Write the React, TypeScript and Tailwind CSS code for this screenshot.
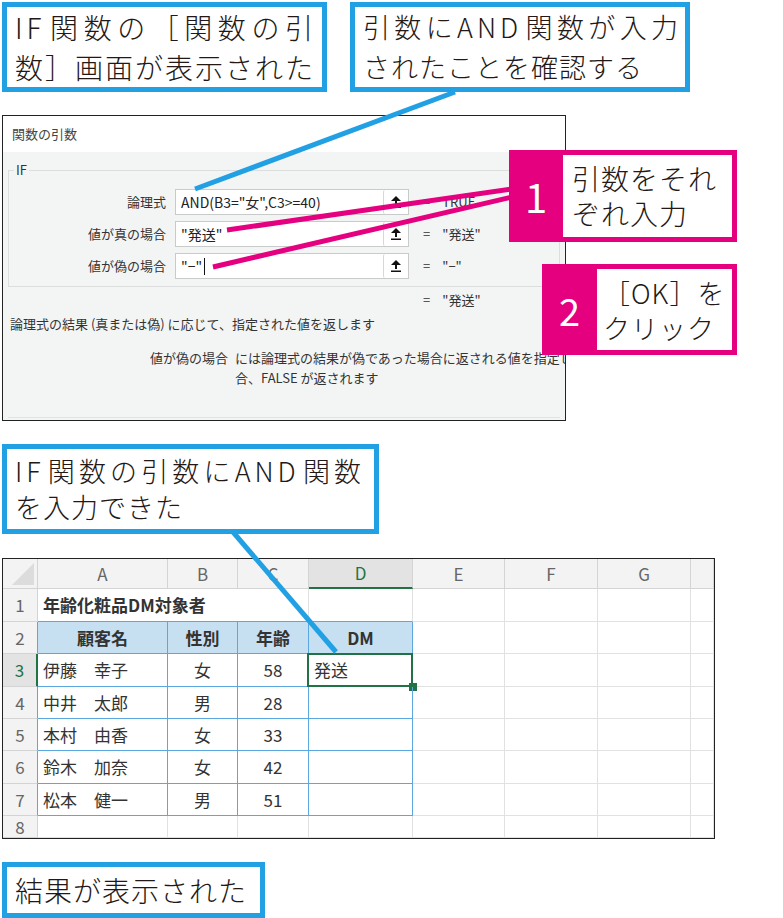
import clsx from 'clsx'
import type { ReactNode } from 'react'

const BLUE = 'border-[#22a0e4]'

function Callout({ className, children }: { className?: string; children: ReactNode }) {
  return (
    <div
      className={clsx(
        'border-[5px] bg-white pl-[8px] flex flex-col justify-center whitespace-nowrap font-light tracking-[1px] text-[#231815]',
        BLUE,
        className
      )}
    >
      {children}
    </div>
  )
}

function StepCallout({ num, className, boxClass, numClass, children }: {
  num: string
  className?: string
  boxClass?: string
  numClass?: string
  children: ReactNode
}) {
  return (
    <div className={clsx('absolute flex bg-[#e4007f] py-[5px] pr-[5px]', className)}>
      <div className={clsx('flex items-center justify-center text-white font-[\'Noto_Sans\',sans-serif]', numClass)}>
        {num}
      </div>
      <div
        className={clsx(
          'flex-1 bg-white flex flex-col justify-center whitespace-nowrap font-light leading-[35px] tracking-[1px] text-[#231815]',
          boxClass
        )}
      >
        {children}
      </div>
    </div>
  )
}

function UpIcon() {
  return (
    <svg width="12" height="14" viewBox="0 0 12 14">
      <polygon points="6,1 11,6 1,6" fill="#111" />
      <rect x="5" y="5" width="2" height="5" fill="#111" />
      <rect x="1" y="11.5" width="10" height="1.5" fill="#111" />
    </svg>
  )
}

function ArgRow({ label, value, result, cursor }: { label: string; value: string; result: string; cursor?: boolean }) {
  return (
    <div className="flex items-center h-[26px]">
      <div className="w-[157px] text-right text-[13px] text-[#333]">{label}</div>
      <div className="ml-[9px] w-[234px] h-[26px] flex items-center bg-white border border-[#c9cbcb]">
        <div className="flex-1 pl-[5px] text-[14px] text-[#222] flex items-center whitespace-nowrap">
          {value}
          {cursor && <span className="ml-[2px] inline-block w-[1px] h-[17px] bg-[#111]" />}
        </div>
        <div className="w-[25px] h-[24px] flex items-center justify-center border-l border-[#d6d8d8] rounded-[2px]">
          <UpIcon />
        </div>
      </div>
      <div className="ml-[14px] flex gap-[12px] text-[13px] text-[#333] whitespace-nowrap">
        <span>=</span>
        <span>{result}</span>
      </div>
    </div>
  )
}

function Dialog() {
  return (
    <div className="ml-[2px] mt-[23px] w-[564px] h-[306px] border border-[#222] flex flex-col overflow-hidden">
      <div className="h-[36px] bg-white flex items-center pl-[9px] text-[13px] text-[#444]">関数の引数</div>
      <div className="flex-1 bg-[#f3f5f5] flex flex-col">
        <div className="relative mt-[18px] ml-[5px] mr-[5px] h-[117px] border border-[#dcdede] pt-[18px] flex flex-col gap-[6px]">
          <span className="absolute -top-[10px] left-[5px] px-[2px] bg-[#f3f5f5] text-[13px] text-[#333] leading-[18px]">IF</span>
          <ArgRow label="論理式" value={'AND(B3="女",C3>=40)'} result="TRUE" />
          <ArgRow label="値が真の場合" value={'"発送"'} result={'"発送"'} />
          <ArgRow label="値が偽の場合" value={'"−"'} result={'"−"'} cursor />
        </div>
        <div className="mt-[4px] pl-[420px] flex gap-[12px] text-[13px] leading-[18px] text-[#333]">
          <span>=</span>
          <span>"発送"</span>
        </div>
        <div className="mt-[6px] pl-[7px] text-[13px] leading-[18px] text-[#333] whitespace-nowrap">
          論理式の結果 (真または偽) に応じて、指定された値を返します
        </div>
        <div className="mt-[15px] flex text-[13px] leading-[20px] text-[#333] whitespace-nowrap">
          <div className="pl-[147px] w-[232px] shrink-0">値が偽の場合</div>
          <div className="flex flex-col overflow-hidden">
            <span>には論理式の結果が偽であった場合に返される値を指定します。省略された場</span>
            <span>合、FALSE が返されます</span>
          </div>
        </div>
        <div className="mt-auto mb-[2px] mx-[5px] border-b border-[#e1e3e3]" />
      </div>
    </div>
  )
}

const gridLine = 'border-r border-b border-[#e1e1e1]'
const tableLine = 'border-r border-b border-[#5ba8e0]'
const headLine = 'border-r border-b border-[#d4d4d4]'

const people = [
  ['伊藤　幸子', '女', '58', '発送'],
  ['中井　太郎', '男', '28', ''],
  ['本村　由香', '女', '33', ''],
  ['鈴木　加奈', '女', '42', ''],
  ['松本　健一', '男', '51', ''],
]

function RowHead({ n, inTable, selected }: { n: number; inTable?: boolean; selected?: boolean }) {
  return (
    <div
      className={clsx(
        'flex items-center justify-center text-[17px] border-b border-[#d4d4d4] font-[\'Noto_Sans\',sans-serif]',
        selected
          ? 'bg-[#e3e3e3] text-[#217346] border-r-2 border-r-[#217346]'
          : 'bg-[#f3f3f3] text-[#666] border-r',
        !selected && (inTable ? 'border-r-[#5ba8e0]' : 'border-r-[#d4d4d4]')
      )}
    >
      {n}
    </div>
  )
}

function Sheet() {
  const cols = ['A', 'B', 'C', 'D', 'E', 'F', 'G', '']
  const empties = (k: string) =>
    [0, 1, 2, 3].map(i => <div key={k + i} className={gridLine} />)
  return (
    <div className="ml-[2px] mt-[24px] w-[713px] h-[281px] border border-[#222] overflow-hidden">
      <div className="grid grid-cols-[35px_130px_70px_71px_104px_92px_93px_93px_23px] grid-rows-[30px_33px_32px_33px_32px_32px_33px_32px_22px] text-[#333] text-[17px]">
        {/* column headers */}
        <div className={clsx('bg-[#f3f3f3] relative', headLine)}>
          <svg className="absolute right-[3px] bottom-[3px]" width="22" height="22" viewBox="0 0 22 22">
            <polygon points="22,0 22,22 0,22" fill="#dcdcdc" />
          </svg>
        </div>
        {cols.map((c, i) => (
          <div
            key={'h' + i}
            className={clsx(
              'flex items-center justify-center text-[17px] font-[\'Noto_Sans\',sans-serif]',
              c === 'D'
                ? 'bg-[#e3e3e3] text-[#217346] border-r border-r-[#d4d4d4] border-b-2 border-b-[#217346]'
                : clsx('bg-[#f3f3f3] text-[#666]', headLine)
            )}
          >
            {c}
          </div>
        ))}

        {/* row 1 */}
        <RowHead n={1} />
        <div className="col-span-3 flex items-center pl-[5px] font-bold border-r border-r-[#e1e1e1] border-b border-b-[#5ba8e0] whitespace-nowrap">
          年齢化粧品DM対象者
        </div>
        <div className="border-r border-r-[#e1e1e1] border-b border-b-[#5ba8e0]" />
        {empties('r1')}

        {/* row 2 */}
        <RowHead n={2} inTable />
        {['顧客名', '性別', '年齢', 'DM'].map(t => (
          <div key={t} className={clsx('flex items-center justify-center font-bold bg-[#c7e0f1]', tableLine)}>
            {t}
          </div>
        ))}
        {empties('r2')}

        {people.map((p, r) => (
          <div key={'p' + r} className="contents">
            <RowHead n={r + 3} inTable selected={r === 0} />
            <div className={clsx('flex items-center pl-[5px] whitespace-nowrap', tableLine)}>{p[0]}</div>
            <div className={clsx('flex items-center justify-center', tableLine)}>{p[1]}</div>
            <div className={clsx('flex items-center justify-center', tableLine)}>{p[2]}</div>
            <div className={clsx('relative flex items-center pl-[5px]', tableLine)}>
              {p[3]}
              {r === 0 && (
                <>
                  <div className="absolute -left-[2px] -top-[1px] -right-[1px] -bottom-[1px] border-2 border-[#217346]" />
                  <div className="absolute -right-[5px] -bottom-[5px] w-[8px] h-[8px] bg-[#217346]" />
                </>
              )}
            </div>
            {empties('e' + r)}
          </div>
        ))}

        {/* row 8 */}
        <RowHead n={8} />
        {[0, 1, 2, 3].map(i => <div key={'r8' + i} className={gridLine} />)}
        {empties('r8b')}
      </div>
    </div>
  )
}

export default function App() {
  return (
    <div className="relative w-[783px] h-[918px] bg-white overflow-hidden font-['Noto_Sans_CJK_JP',sans-serif]">
      <div className="flex pt-[2px] pl-[2px] gap-[23px]">
        <Callout className="w-[325px] h-[90px] pr-[8px] text-[28px] leading-[40px]">
          <span className="block [text-align-last:justify]">
            <span className="tracking-[4px]">IF</span>関数の［関数の引
          </span>
          <span className="block [text-align-last:justify]">数］画面が表示された</span>
        </Callout>
        <Callout className="w-[340px] h-[90px] pr-[6px] text-[27px] leading-[40px] tracking-[0.5px]">
          <span className="block [text-align-last:justify]">
            引数に<span className="tracking-[4px]">AND</span>関数が入力
          </span>
          <span>されたことを確認する</span>
        </Callout>
      </div>

      <Dialog />

      <Callout className="ml-[2px] mt-[23px] w-[377px] h-[90px] pr-[12px] text-[27px] leading-[36px]">
        <span className="block [text-align-last:justify]">
          <span className="tracking-[4px]">IF</span>関数の引数に<span className="tracking-[4px]">AND</span>関数
        </span>
        <span>を入力できた</span>
      </Callout>

      <Sheet />

      <Callout className="ml-[2px] mt-[23px] w-[263px] h-[56px] text-[28px] leading-[36px]">
        <span>結果が表示された</span>
      </Callout>

      {/* leader lines */}
      <svg className="absolute inset-0 pointer-events-none" width="783" height="918" viewBox="0 0 783 918">
        <line x1="455" y1="92" x2="195" y2="189" stroke="#22a0e4" strokeWidth="5" />
        <line x1="233" y1="532" x2="336" y2="652" stroke="#22a0e4" strokeWidth="5" />
        <line x1="227" y1="230" x2="512" y2="189" stroke="#e4007f" strokeWidth="5" />
        <line x1="213" y1="267" x2="512" y2="197" stroke="#e4007f" strokeWidth="5" />
      </svg>

      <StepCallout
        num="1"
        className="left-[509px] top-[150px] w-[228px] h-[92px]"
        numClass="w-[54px] text-[40px]"
        boxClass="pl-[9px] text-[28px]"
      >
        <span>引数をそれ</span>
        <span>ぞれ入力</span>
      </StepCallout>
      <StepCallout
        num="2"
        className="left-[542px] top-[264px] w-[195px] h-[91px]"
        numClass="w-[55px] text-[38px]"
        boxClass="pl-[6px] text-[27px]"
      >
        <span>［OK］を</span>
        <span>クリック</span>
      </StepCallout>
    </div>
  )
}
